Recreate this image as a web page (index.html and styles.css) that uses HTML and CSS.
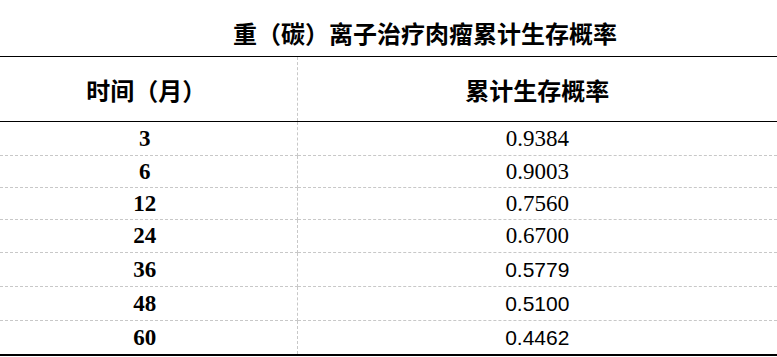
FILE: index.html
```html
<!DOCTYPE html>
<html lang="zh">
<head>
<meta charset="utf-8">
<link rel="stylesheet" href="styles.css">
</head>
<body>
<div class="title">重（碳）离子治疗肉瘤累计生存概率</div>
<table class="tbl">
  <colgroup><col class="col1"><col class="col2"></colgroup>
  <thead>
    <tr><th class="c1">时间（月）</th><th class="c2">累计生存概率</th></tr>
  </thead>
  <tbody>
    <tr><td class="c1 n">3</td><td class="c2 v">0.9384</td></tr>
    <tr><td class="c1 n">6</td><td class="c2 v">0.9003</td></tr>
    <tr><td class="c1 n">12</td><td class="c2 v">0.7560</td></tr>
    <tr><td class="c1 n">24</td><td class="c2 v">0.6700</td></tr>
    <tr><td class="c1 n">36</td><td class="c2 v sans">0.5779</td></tr>
    <tr><td class="c1 n">48</td><td class="c2 v sans">0.5100</td></tr>
    <tr><td class="c1 n">60</td><td class="c2 v sans">0.4462</td></tr>
  </tbody>
</table>
</body>
</html>
```
FILE: styles.css
```css
html, body { margin: 0; padding: 0; background: #fff; }
body { width: 777px; height: 357px; overflow: hidden; color: #000; }

.title {
  height: 56px;
  box-sizing: border-box;
  padding: 19px 0 0 73px;
  text-align: center;
  font-family: "Noto Sans CJK SC", sans-serif;
  font-weight: 700;
  font-size: 24px;
  line-height: 28px;
}

.tbl {
  width: 777px;
  border-collapse: collapse;
  table-layout: fixed;
  border-top: 1px solid #000;
  border-bottom: 2px solid #000;
}
.col1 { width: 297px; }
.c1 { border-right: 1px dashed #c8c8c8; }
.tbl th {
  height: 64px;
  padding: 0;
  font-family: "Noto Sans CJK SC", sans-serif;
  font-weight: 700;
  font-size: 24px;
  text-align: center;
  border-bottom: 1px solid #000;
}
.tbl th.c1 { padding-right: 4px; }
.tbl td {
  padding: 0;
  height: 32px;
  text-align: center;
  font-size: 22px;
  line-height: 24px;
  border-bottom: 1px dashed #c8c8c8;
}
.tbl tbody tr:last-child td { border-bottom: none; }
.tbl tbody tr:nth-child(1) td { height: 33px; }
.tbl tbody tr:nth-child(4) td { height: 32px; }
.tbl tbody tr:nth-child(5) td,
.tbl tbody tr:nth-child(6) td { height: 33px; }
.tbl tbody tr:nth-child(7) td { height: 33px; }
.tbl tbody tr:nth-child(2) td,
.tbl tbody tr:nth-child(3) td { height: 31px; }

.tbl td.n { font-family: "Liberation Serif", serif; font-weight: 700; font-size: 23px; padding-right: 7px; }
.tbl td.v { font-family: "Liberation Serif", serif; font-size: 23px; }
.tbl td.v.sans { font-family: "Liberation Sans", sans-serif; font-size: 21px; }
```
